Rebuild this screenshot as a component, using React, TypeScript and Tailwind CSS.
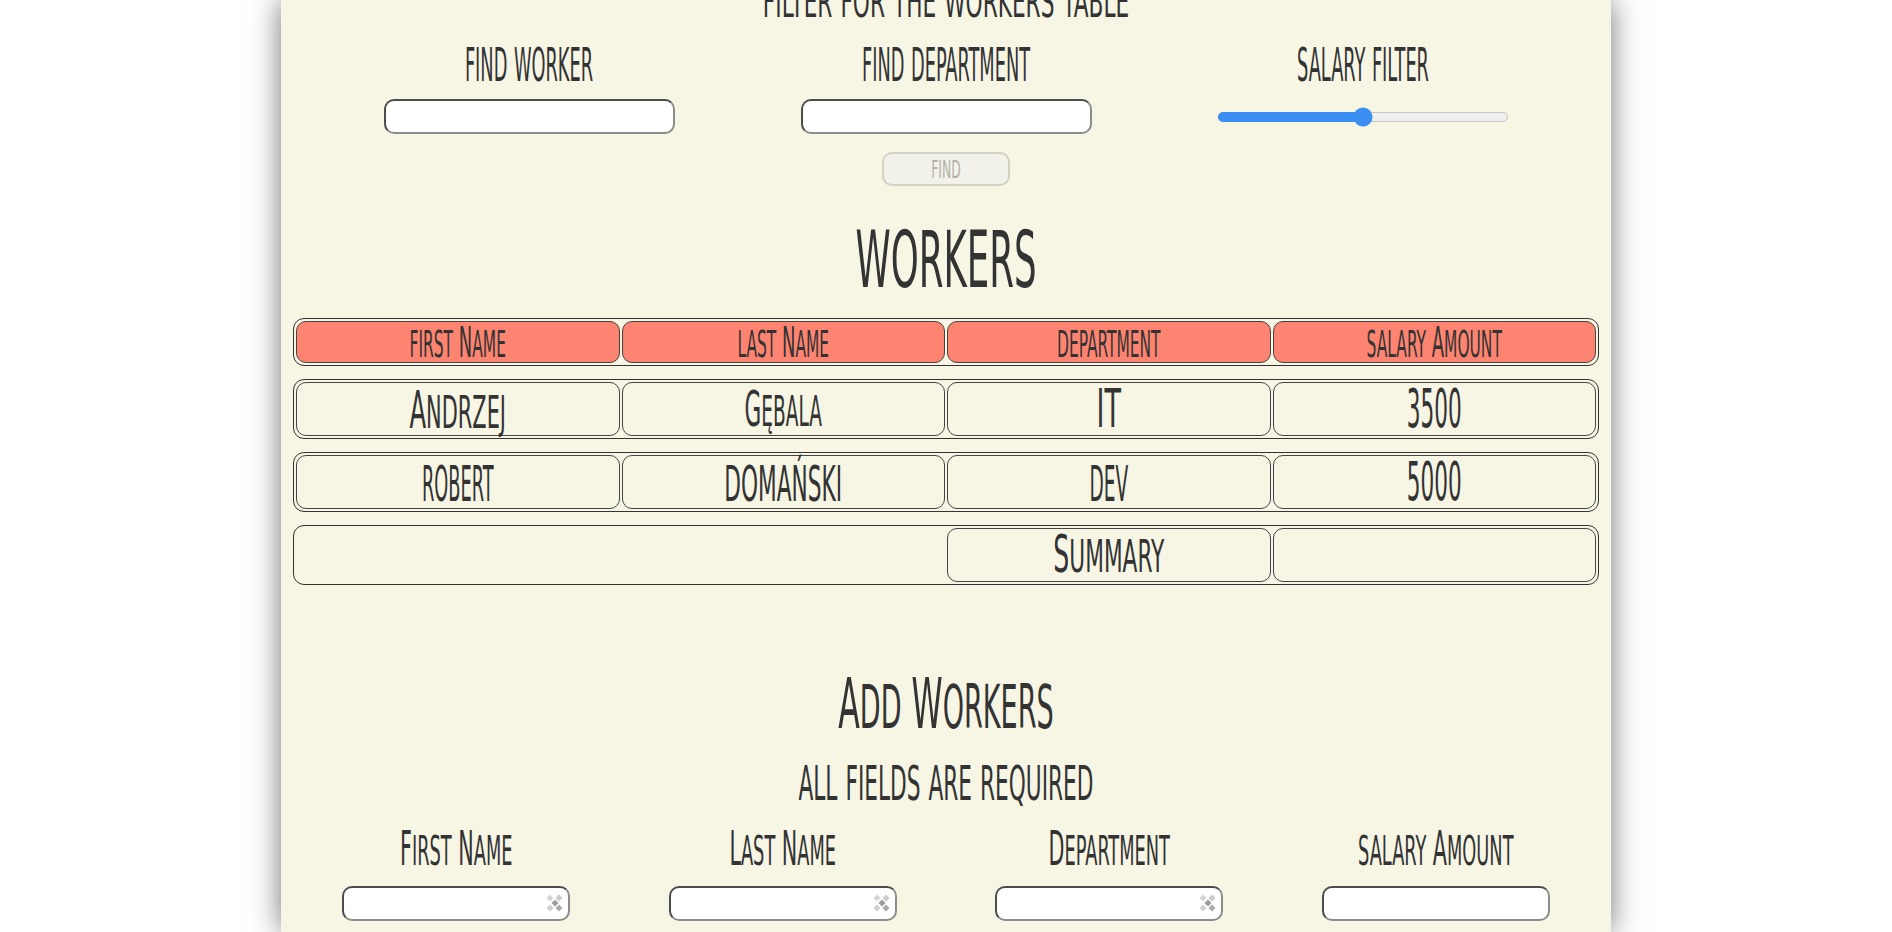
import React from 'react';

// lowercase letters are drawn as slightly smaller capitals, like the small-caps face of the original
const SC: React.FC<{ text: string; className?: string }> = ({ text, className = 'scale-y-[1.8]' }) => {
  const parts = text.match(/(\p{Ll}+|[^\p{Ll}]+)/gu) ?? [];
  return (
    <span className={`inline-block leading-none whitespace-nowrap ${className}`}>
      {parts.map((p, i) =>
        /\p{Ll}/u.test(p) ? (
          <span key={i} className="text-[0.86em] uppercase">
            {p}
          </span>
        ) : (
          <React.Fragment key={i}>{p}</React.Fragment>
        ),
      )}
    </span>
  );
};

const DiamondsIcon = () => (
  <svg width="18" height="18" viewBox="0 0 18 18">
    <path d="M4 0.5 L7.5 4 L4 7.5 L0.5 4 Z" fill="#d6d6d6" />
    <path d="M13 0.5 L16.5 4 L13 7.5 L9.5 4 Z" fill="#cacaca" />
    <path d="M9 5.5 L12.5 9 L9 12.5 L5.5 9 Z" fill="#9c9c9c" />
    <path d="M4 10.5 L7.5 14 L4 17.5 L0.5 14 Z" fill="#d0d0d0" />
    <path d="M13 10.5 L16.5 14 L13 17.5 L9.5 14 Z" fill="#ababab" />
  </svg>
);

const inputBorder =
  'rounded-[10px] border-2 border-t-[#4b4b4b] border-l-[#4b4b4b] border-r-[#8c8c8c] border-b-[#8c8c8c] bg-white';

type Cell = { t: string; size: string; sy: string };

const rows: Cell[][] = [
  [
    { t: 'Andrzej', size: 'text-[27px]', sy: 'scale-y-[1.9]' },
    { t: 'Gębala', size: 'text-[24px]', sy: 'scale-y-[2.1]' },
    { t: 'IT', size: 'text-[30px]', sy: 'scale-y-[1.8]' },
    { t: '3500', size: 'text-[24px]', sy: 'scale-y-[2.2]' },
  ],
  [
    { t: 'robert', size: 'text-[23px]', sy: 'scale-y-[2.5]' },
    { t: 'domański', size: 'text-[28px]', sy: 'scale-y-[2.1]' },
    { t: 'dev', size: 'text-[24px]', sy: 'scale-y-[2.4]' },
    { t: '5000', size: 'text-[24px]', sy: 'scale-y-[2.2]' },
  ],
];

const headers = ['first Name', 'last Name', 'department', 'salary Amount'];
const filterLabels = ['find worker', 'find department', 'salary filter'];

export default function App() {
  return (
    <div className="h-[932px] overflow-hidden bg-white">
      <div className="mx-auto flex h-[932px] w-[1330px] flex-col overflow-hidden bg-[#f7f6e5] text-[#333] shadow-[0_0_28px_rgba(0,0,0,0.55)] font-['Liberation_Sans_Narrow','DejaVu_Sans_Condensed','Liberation_Sans',sans-serif]">
        {/* filter */}
        <div className="-mt-[19px] flex h-[40px] shrink-0 items-center justify-center text-[28px]">
          <SC text="filter for the workers table" />
        </div>

        <div className="mt-[22px] grid grid-cols-[417px_417px_417px] justify-center">
          {filterLabels.map((label, i) => (
            <div key={label} className="flex flex-col items-center">
              <div className="flex h-[40px] items-center text-[23px]">
                <SC text={label} className="scale-y-[2.3]" />
              </div>
              <div className="mt-[16px] flex h-[35px] items-center">
                {i < 2 ? (
                  <input type="text" className={`h-[35px] w-[291px] ${inputBorder}`} />
                ) : (
                  <div className="relative h-[10px] w-[290px] rounded-full border border-[#c6c6c6] bg-[#efefef]">
                    <div className="-ml-px -mt-px h-[10px] w-1/2 rounded-full bg-[#3b8ef2]" />
                    <div className="absolute left-1/2 top-1/2 h-[19px] w-[19px] -translate-x-1/2 -translate-y-1/2 rounded-full bg-[#3b8ef2]" />
                  </div>
                )}
              </div>
            </div>
          ))}
        </div>

        <div className="mt-[18px] flex justify-center">
          <button
            disabled
            className="flex h-[34px] w-[128px] items-center justify-center rounded-[10px] border-2 border-[#d3d1c4] bg-[#f3f2ea] text-[16px] text-[#b3b1a6]"
          >
            <SC text="find" className="scale-y-[1.8]" />
          </button>
        </div>

        {/* workers table */}
        <div className="mt-[34px] flex h-[70px] shrink-0 items-center justify-center text-[46px]">
          <SC text="workers" className="scale-y-[2]" />
        </div>

        <div className="mx-[12px] mt-[28px] flex flex-col gap-[13px]">
          <div className="grid grid-cols-4 gap-[2px] rounded-[11px] border border-[#333] p-[2px]">
            {headers.map((h) => (
              <div
                key={h}
                className="flex h-[42px] items-center justify-center rounded-[10px] border border-[#444] bg-[#fd8470] text-[20px]"
              >
                <SC text={h} className="scale-y-[2.15]" />
              </div>
            ))}
          </div>

          {rows.map((row, r) => (
            <div key={r} className="grid grid-cols-4 gap-[2px] rounded-[11px] border border-[#333] p-[2px]">
              {row.map((c) => (
                <div
                  key={c.t}
                  className={`flex h-[54px] items-center justify-center rounded-[10px] border border-[#444] ${c.size}`}
                >
                  <SC text={c.t} className={c.sy} />
                </div>
              ))}
            </div>
          ))}

          <div className="grid grid-cols-4 gap-[2px] rounded-[11px] border border-[#333] p-[2px]">
            <div className="h-[54px]" />
            <div className="h-[54px]" />
            <div className="flex h-[54px] items-center justify-center rounded-[10px] border border-[#444] text-[28px]">
              <SC text="Summary" className="scale-y-[1.85]" />
            </div>
            <div className="h-[54px] rounded-[10px] border border-[#444]" />
          </div>
        </div>

        {/* add workers */}
        <div className="mt-[89px] flex h-[60px] shrink-0 items-center justify-center text-[35px]">
          <SC text="Add Workers" className="scale-y-[2]" />
        </div>
        <div className="mt-[23px] flex h-[50px] shrink-0 items-center justify-center text-[28px]">
          <SC text="all fields are required" className="scale-y-[2]" />
        </div>

        <div className="mx-[12px] mt-[22px] grid grid-cols-4">
          {['First Name', 'Last Name', 'Department', 'salary Amount'].map((label, i) => (
            <div key={label} className="flex flex-col items-center">
              <div className="flex h-[40px] items-center text-[23px]">
                <SC text={label} className="scale-y-[2.05]" />
              </div>
              <div className="relative mt-[17px] h-[35px] w-[228px]">
                <input type={i === 3 ? 'number' : 'text'} className={`h-[35px] w-[228px] ${inputBorder}`} />
                {i < 3 && (
                  <span className="pointer-events-none absolute right-[6px] top-[8px]">
                    <DiamondsIcon />
                  </span>
                )}
              </div>
            </div>
          ))}
        </div>
      </div>
    </div>
  );
}
